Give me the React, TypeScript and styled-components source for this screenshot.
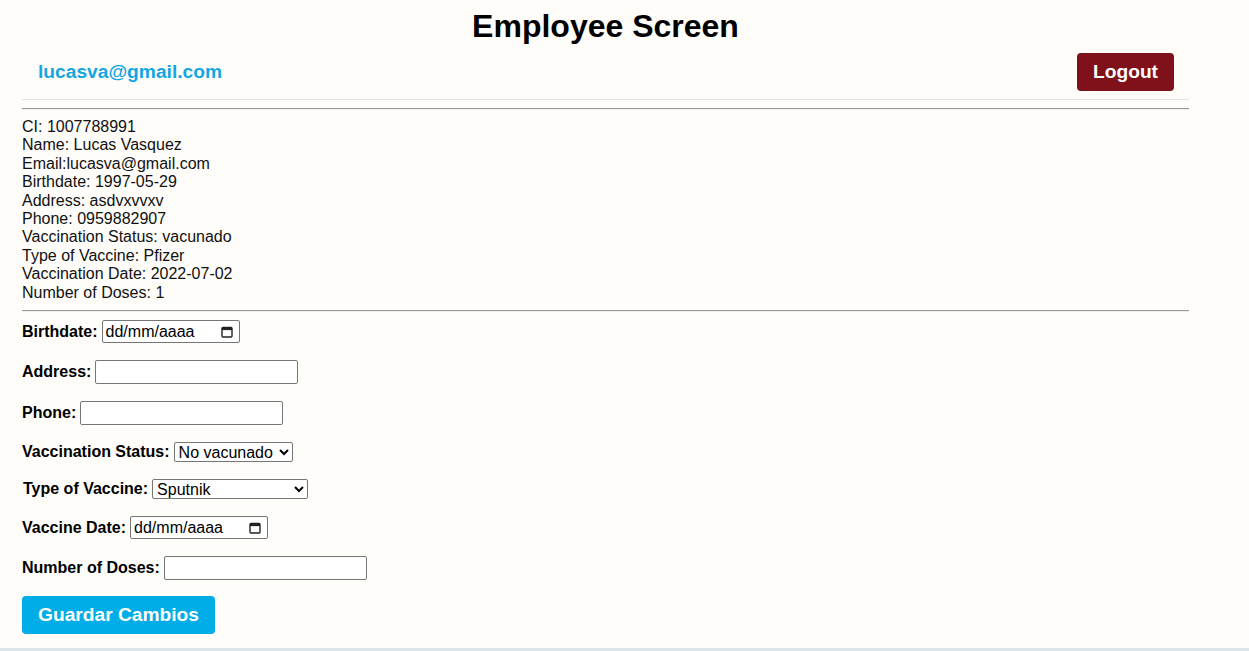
import React, { useState } from 'react';
import styled, { createGlobalStyle } from 'styled-components';

const GlobalStyle = createGlobalStyle`
  html, body {
    margin: 0;
    padding: 0;
    background-color: #fffdf9;
  }

  body {
    font-family: "Liberation Sans", Arial, sans-serif;
    color: #000;
  }
`;

const Page = styled.div`
  min-height: 100vh;
  display: flex;
  flex-direction: column;
`;

const Container = styled.div`
  width: 1167px;
  margin-left: 22px;
  padding-top: 8px;
`;

const Title = styled.h1`
  margin: 0;
  font-size: 32px;
  font-weight: bold;
  text-align: center;
  line-height: 37px;
`;

const Header = styled.div`
  display: flex;
  justify-content: space-between;
  align-items: center;
  padding: 8px 15px 8px 16px;
  border-bottom: 1px solid #e2e2e2;
`;

const UserEmail = styled.span`
  font-size: 19.2px;
  font-weight: bold;
  color: #14a6e3;
`;

const ActionButton = styled.button<{ $variant: 'danger' | 'primary' }>`
  border: none;
  border-radius: 4px;
  padding: 8px 16px;
  font-family: "Liberation Sans", Arial, sans-serif;
  font-size: 19.2px;
  font-weight: bold;
  line-height: 22px;
  color: white;
  cursor: pointer;
  background-color: ${(p) => (p.$variant === 'danger' ? '#801019' : '#00ade7')};
`;

const Divider = styled.hr`
  border: none;
  border-top: 1px solid #9a9a9a;
  border-bottom: 1px solid #efefef;
  margin: 8px 0;
  height: 0;
`;

const InfoBlock = styled.div`
  font-size: 16px;
  line-height: 18.4px;
  color: #111;
`;

const Form = styled.form`
  display: flex;
  flex-direction: column;
  align-items: flex-start;
  gap: 17px;
`;

const Row = styled.div<{ $indent?: boolean }>`
  display: flex;
  align-items: center;
  gap: 4px;
  margin-left: ${(p) => (p.$indent ? '1px' : '0')};
`;

const Label = styled.label`
  font-size: 16px;
  font-weight: bold;
`;

const TextInput = styled.input`
  box-sizing: border-box;
  width: 203px;
  height: 24px;
  border: 1px solid #767676;
  border-radius: 2px;
  padding: 1px 3px;
  font-family: "Liberation Sans", Arial, sans-serif;
  font-size: 16px;
  background: white;
`;

const DateBox = styled.div`
  box-sizing: border-box;
  width: 138px;
  height: 23px;
  display: flex;
  align-items: center;
  border: 1px solid #767676;
  border-radius: 2px;
  padding: 0 6px 0 3px;
  background: white;
`;

const DateInput = styled.input`
  flex: 1;
  min-width: 0;
  border: none;
  outline: none;
  padding: 0;
  background: transparent;
  font-family: "Liberation Sans", Arial, sans-serif;
  font-size: 16px;
  color: #000;

  &::placeholder {
    color: #000;
  }
`;

const Select = styled.select<{ $width: number }>`
  box-sizing: border-box;
  width: ${(p) => p.$width}px;
  height: 20px;
  border: 1px solid #767676;
  border-radius: 2px;
  padding: 0;
  font-family: "Liberation Sans", Arial, sans-serif;
  font-size: 16px;
  background: white;
  color: #000;
`;

const SubmitRow = styled.div`
  margin-top: -1px;
`;

const BottomBar = styled.div`
  margin-top: auto;
  height: 3px;
  background-color: #dce6ea;
`;

const CalendarIcon = () => (
  <svg width="12" height="12" viewBox="0 0 12 12">
    <rect x="1" y="1.5" width="10" height="9.5" rx="1" fill="none" stroke="#222" strokeWidth="1.4" />
    <rect x="1" y="1.5" width="10" height="2.6" fill="#222" />
  </svg>
);

const DateField: React.FC<{ id: string }> = ({ id }) => (
  <DateBox>
    <DateInput id={id} type="text" placeholder="dd/mm/aaaa" />
    <CalendarIcon />
  </DateBox>
);

const employee = {
  ci: '1007788991',
  name: 'Lucas Vasquez',
  email: 'lucasva@gmail.com',
  birthdate: '1997-05-29',
  address: 'asdvxvvxv',
  phone: '0959882907',
  status: 'vacunado',
  vaccine: 'Pfizer',
  vaccineDate: '2022-07-02',
  doses: 1,
};

const App: React.FC = () => {
  const [status, setStatus] = useState('No vacunado');
  const [vaccine, setVaccine] = useState('Sputnik');

  return (
    <Page>
      <GlobalStyle />
      <Container>
        <Title>Employee Screen</Title>
        <Header>
          <UserEmail>{employee.email}</UserEmail>
          <ActionButton $variant="danger">Logout</ActionButton>
        </Header>
        <Divider />
        <InfoBlock>
          <div>CI: {employee.ci}</div>
          <div>Name: {employee.name}</div>
          <div>Email:{employee.email}</div>
          <div>Birthdate: {employee.birthdate}</div>
          <div>Address: {employee.address}</div>
          <div>Phone: {employee.phone}</div>
          <div>Vaccination Status: {employee.status}</div>
          <div>Type of Vaccine: {employee.vaccine}</div>
          <div>Vaccination Date: {employee.vaccineDate}</div>
          <div>Number of Doses: {employee.doses}</div>
        </InfoBlock>
        <Divider />
        <Form onSubmit={(e) => e.preventDefault()}>
          <Row>
            <Label htmlFor="birthdate">Birthdate:</Label>
            <DateField id="birthdate" />
          </Row>
          <Row>
            <Label htmlFor="address">Address:</Label>
            <TextInput id="address" type="text" />
          </Row>
          <Row>
            <Label htmlFor="phone">Phone:</Label>
            <TextInput id="phone" type="text" />
          </Row>
          <Row>
            <Label htmlFor="status">Vaccination Status:</Label>
            <Select id="status" $width={119} value={status} onChange={(e) => setStatus(e.target.value)}>
              <option>No vacunado</option>
              <option>Vacunado</option>
            </Select>
          </Row>
          <Row $indent>
            <Label htmlFor="vaccine">Type of Vaccine:</Label>
            <Select id="vaccine" $width={156} value={vaccine} onChange={(e) => setVaccine(e.target.value)}>
              <option>Sputnik</option>
              <option>AstraZeneca</option>
              <option>Pfizer</option>
              <option>Jhonson&amp;Jhonson</option>
            </Select>
          </Row>
          <Row>
            <Label htmlFor="vaccineDate">Vaccine Date:</Label>
            <DateField id="vaccineDate" />
          </Row>
          <Row>
            <Label htmlFor="doses">Number of Doses:</Label>
            <TextInput id="doses" type="text" />
          </Row>
          <SubmitRow>
            <ActionButton $variant="primary" type="submit">Guardar Cambios</ActionButton>
          </SubmitRow>
        </Form>
      </Container>
      <BottomBar />
    </Page>
  );
};

export default App;
